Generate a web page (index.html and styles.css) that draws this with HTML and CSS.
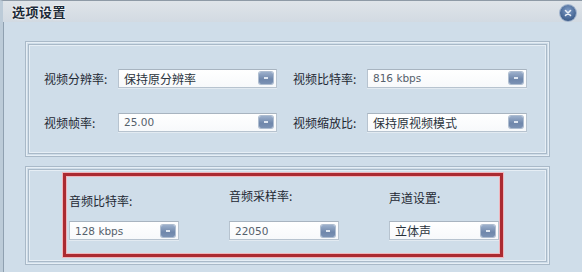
FILE: index.html
```html
<!DOCTYPE html>
<html lang="zh">
<head>
<meta charset="utf-8">
<link rel="stylesheet" href="styles.css">
</head>
<body>
<div class="window">
  <div class="titlebar">
    <span class="title">选项设置</span>
    <span class="close"><svg width="16" height="16" viewBox="0 0 16 16"><path d="M5.5 5.5 L10.5 10.5 M10.5 5.5 L5.5 10.5" stroke="#e8eef6" stroke-width="1.6" stroke-linecap="round"/></svg></span>
  </div>
  <div class="content">
    <div class="group group-video">
      <div class="group-inner">
        <div class="vrow">
          <div class="field">
            <span class="label">视频分辨率:</span>
            <div class="select w159"><span class="val cjk">保持原分辨率</span><span class="btn"></span></div>
          </div>
          <div class="field">
            <span class="label">视频比特率:</span>
            <div class="select w160"><span class="val">816 kbps</span><span class="btn"></span></div>
          </div>
        </div>
        <div class="vrow">
          <div class="field">
            <span class="label">视频帧率:</span>
            <div class="select w159"><span class="val">25.00</span><span class="btn"></span></div>
          </div>
          <div class="field">
            <span class="label">视频缩放比:</span>
            <div class="select w160"><span class="val cjk">保持原视频模式</span><span class="btn"></span></div>
          </div>
        </div>
      </div>
    </div>
    <div class="group group-audio">
      <div class="group-inner">
        <div class="redbox">
          <div class="acol a1">
            <span class="label">音频比特率:</span>
            <div class="select w110"><span class="val">128 kbps</span><span class="btn"></span></div>
          </div>
          <div class="acol a2">
            <span class="label">音频采样率:</span>
            <div class="select w110"><span class="val">22050</span><span class="btn"></span></div>
          </div>
          <div class="acol a3">
            <span class="label">声道设置:</span>
            <div class="select w110"><span class="val cjk">立体声</span><span class="btn"></span></div>
          </div>
        </div>
      </div>
    </div>
  </div>
</div>
</body>
</html>
```
FILE: styles.css
```css
html, body {
  margin: 0;
  padding: 0;
  background: #cfdde9;
}
body {
  font-family: "Noto Sans CJK SC", "Liberation Sans", sans-serif;
  font-size: 12px;
  color: #1e2833;
}
.window {
  width: 582px;
  height: 272px;
  box-sizing: border-box;
  border-top: 1px solid #8e9aa6;
  border-left: 3px solid #bccbd8;
  box-shadow: inset 1px 0 0 #8fa0b0;
  background: #cfdde9;
  overflow: hidden;
  position: relative;
}
.titlebar {
  height: 21px;
  background: linear-gradient(#dfe4e9, #d2dae2);
  display: flex;
  align-items: center;
  padding-left: 9px;
  position: relative;
}
.title {
  font-size: 13px;
  font-weight: 700;
  color: #1c2a38;
  letter-spacing: 0.5px;
  text-shadow: 0 0 2px #ffffff, 0 0 2px #ffffff;
}
.close {
  position: absolute;
  left: 557px;
  top: 4px;
  width: 16px;
  height: 16px;
  border-radius: 50%;
  background: radial-gradient(circle at 50% 35%, #7f9cc6, #41618f 70%, #33507a);
  box-shadow: 0 0 0 1px #9fb2cc;
  display: flex;
}
.content {
  padding: 19px 0 0 22px;
}
.group {
  width: 525px;
  box-sizing: border-box;
  border: 1px solid #a9b9c8;
  box-shadow: inset 0 0 0 1px #e6eef5;
  padding: 2px;
}
.group-inner {
  border: 1px solid #a9b9c8;
  box-shadow: 0 0 0 1px #e6eef5 inset;
  height: 100%;
  box-sizing: border-box;
}
.group-video {
  height: 116px;
}
.group-video .group-inner {
  padding: 23px 0 0 15px;
  display: flex;
  flex-direction: column;
  gap: 24px;
}
.vrow {
  display: flex;
  height: 20px;
}
.field {
  display: flex;
  align-items: center;
}
.field:first-child {
  width: 249px;
}
.field .label {
  width: 74px;
  flex: none;
}
.label {
  font-size: 12px;
  color: #1e2833;
  white-space: nowrap;
}
.select {
  height: 19px;
  box-sizing: border-box;
  border: 1px solid #b7c3cf;
  border-top-color: #a8b4c0;
  background: linear-gradient(#ffffff, #f7f9fb);
  display: flex;
  align-items: center;
  justify-content: space-between;
  padding: 0 3px 0 5px;
  box-shadow: 0 1px 0 #e2eaf1;
}
.w159 { width: 159px; }
.w160 { width: 160px; }
.w110 { width: 110px; }
.val {
  font-family: "DejaVu Sans", "Liberation Sans", sans-serif;
  font-size: 10.5px;
  color: #55606b;
}
.val.cjk {
  font-family: "Noto Sans CJK SC", sans-serif;
  font-size: 12px;
  color: #2a333c;
}
.btn {
  width: 14px;
  height: 12px;
  border-radius: 2px;
  background: linear-gradient(#9cb0cc, #6f87ab 60%, #7b92b4);
  box-shadow: 0 0 0 1px #aebdd0;
  position: relative;
}
.btn::after {
  content: "";
  position: absolute;
  left: 5px;
  top: 5px;
  width: 4px;
  height: 2px;
  background: #dfe7f1;
}
.group-audio {
  height: 99px;
  margin-top: 9px;
}
.group-audio .group-inner {
  padding: 3px 0 0 34px;
}
.redbox {
  width: 440px;
  height: 84px;
  box-sizing: border-box;
  border: 3px solid #ab2a31;
  box-shadow: 0 0 0 1px #f0b6bd, inset 0 0 0 1px #f0b6bd;
  display: flex;
  padding: 0 0 0 3px;
}
.acol {
  display: flex;
  flex-direction: column;
  width: 160px;
}
.acol .label {
  height: 18px;
  line-height: 18px;
}
.a1 { padding-top: 16px; }
.a1 .label { margin-bottom: 11px; }
.a2 { padding-top: 11px; }
.a2 .label { margin-bottom: 16px; }
.a3 { padding-top: 13px; width: auto; }
.a3 .label { margin-bottom: 14px; }
```
